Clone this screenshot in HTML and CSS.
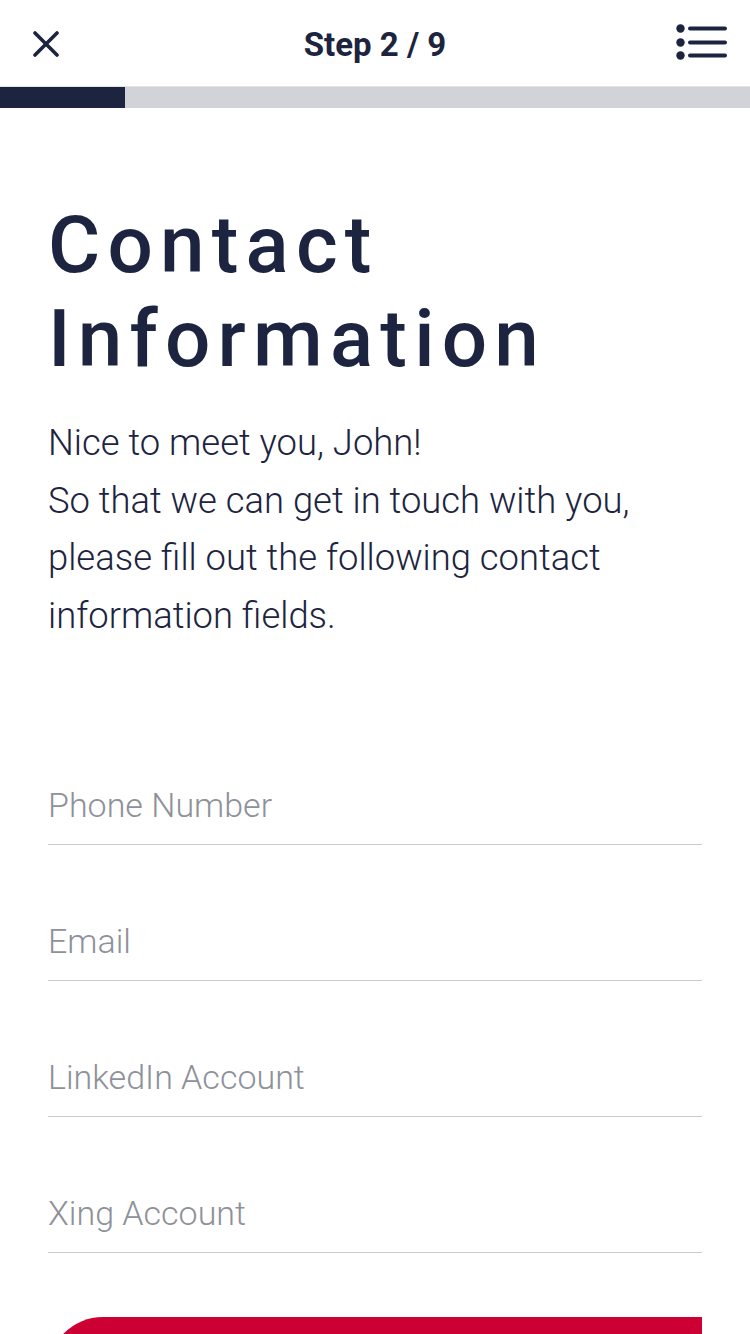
FILE: index.html
```html
<!DOCTYPE html>
<html lang="en">
<head>
<meta charset="utf-8">
<title>Contact Information</title>
<link rel="stylesheet" href="styles.css">
</head>
<body>
<header class="topbar">
  <button class="icon-btn close" aria-label="Close">
    <svg width="26" height="26" viewBox="0 0 26 26"><path d="M2 2 L24 24 M24 2 L2 24" stroke="#1c2440" stroke-width="3.6" stroke-linecap="round" fill="none"/></svg>
  </button>
  <div class="step">Step 2 / 9</div>
  <button class="icon-btn menu" aria-label="Menu">
    <svg width="52" height="38" viewBox="0 0 52 38"><circle cx="4.5" cy="4.5" r="4.2" fill="#1c2440"/><circle cx="4.5" cy="18.5" r="4.2" fill="#1c2440"/><circle cx="4.5" cy="31.5" r="4.2" fill="#1c2440"/><path d="M14 4.5 H49 M14 18.5 H49 M14 31.5 H49" stroke="#1c2440" stroke-width="4" stroke-linecap="round"/></svg>
  </button>
</header>
<div class="progress"><div class="progress-fill" style="width:125px"></div></div>
<main class="content">
  <h1 class="title">Contact<br>Information</h1>
  <p class="intro">Nice to meet you, John!<br>So that we can get in touch with you, please fill out the following contact information fields.</p>
  <form class="form">
    <input class="field" type="tel" placeholder="Phone Number">
    <input class="field" type="email" placeholder="Email">
    <input class="field" type="text" placeholder="LinkedIn Account">
    <input class="field" type="text" placeholder="Xing Account">
    <button class="next" type="button" aria-label="Next"></button>
  </form>
</main>
</body>
</html>
```
FILE: styles.css
```css
* { box-sizing: border-box; }
html, body { margin: 0; padding: 0; background: #fff; }
body { font-family: Roboto, "Noto Sans", sans-serif; color: #1c2440; width: 750px; height: 1334px; overflow: hidden; }

.topbar {
  height: 87px;
  display: flex;
  align-items: center;
  justify-content: space-between;
  padding: 0 22px 0 32px;
  border-bottom: 1px solid #e2e3e6;
}
.icon-btn { background: none; border: 0; padding: 0; display: flex; align-items: center; justify-content: center; }
.close { width: 28px; height: 28px; margin-top: 1px; }
.menu { width: 52px; height: 38px; }
.step { font-size: 33px; font-weight: 700; letter-spacing: 0; margin-left: 14px; margin-top: 3px; }

.progress { height: 21px; background: #d2d3d8; }
.progress-fill { height: 100%; background: #1c2440; }

.content { padding: 90px 48px 0; }
.title {
  margin: 0;
  font-size: 80px;
  font-weight: 500;
  line-height: 94px;
  letter-spacing: 7.2px;
}
.intro {
  margin: 28px 0 0;
  font-size: 36.4px;
  font-weight: 300;
  line-height: 57.5px;
  max-width: 620px;
}
.form { display: flex; flex-direction: column; margin-top: 131px; }
.field {
  height: 70px;
  margin-top: 66px;
  border: 0;
  border-bottom: 1.5px solid #c9cacd;
  padding: 0 0 10px;
  font-family: Roboto, sans-serif;
  font-size: 34px;
  font-weight: 300;
  color: #1c2440;
  outline: none;
  background: transparent;
}
.field:first-child { margin-top: 0; }
.field::placeholder { color: #8e9199; }
.next {
  margin-top: 64px;
  height: 110px;
  flex-shrink: 0;
  border: 0;
  background: #cc0033;
  border-radius: 58px 0 0 58px;
}
```
